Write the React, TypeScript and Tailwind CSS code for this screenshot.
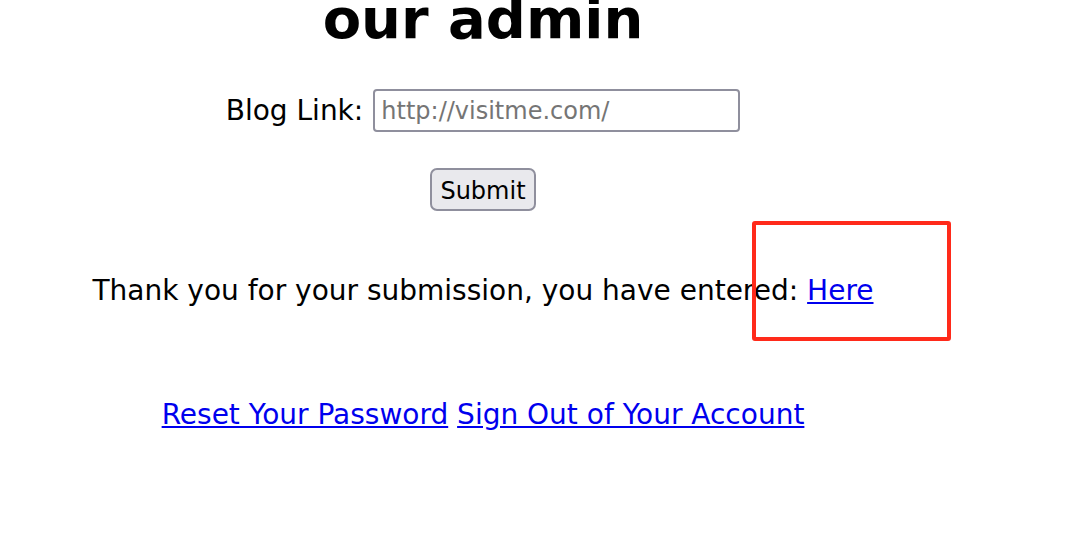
export default function App() {
  return (
    <div className="relative h-[547px] w-[1068px] overflow-hidden bg-white font-['DejaVu_Sans',sans-serif] text-black">
      <div className="w-[966px] text-center">
        {/* Heading, scrolled so only its last line shows */}
        <h1 className="mt-[-9px] text-[56px] leading-[56px] font-bold">our admin</h1>

        {/* Form */}
        <form className="mt-[41px]" onSubmit={(e) => e.preventDefault()}>
          <div className="flex items-center justify-center gap-[10px]">
            <label htmlFor="blog" className="pt-[2px] text-[28px]">
              Blog Link:
            </label>
            <input
              id="blog"
              type="text"
              placeholder="http://visitme.com/"
              className="h-[43px] w-[367px] rounded-[4px] border-2 border-[#8f8f9d] bg-white px-[6px] pt-[2px] text-[24px] outline-none placeholder:text-[#757575]"
            />
          </div>
          <div className="mt-[36px] flex justify-center">
            <button
              type="submit"
              className="h-[43px] w-[106px] rounded-[7px] border-2 border-[#8f8f9d] bg-[#e9e9ed] pt-[3px] text-[24px]"
            >
              Submit
            </button>
          </div>
        </form>

        <p className="mt-[59px] text-[28px]">
          Thank you for your submission, you have entered:{' '}
          <a href="#" className="text-[#0000ee] underline">
            Here
          </a>
        </p>

        <p className="mt-[82px] text-[28px]">
          <a href="#" className="text-[#0000ee] underline">
            Reset Your Password
          </a>{' '}
          <a href="#" className="text-[#0000ee] underline">
            Sign Out of Your Account
          </a>
        </p>
      </div>

      {/* Highlight annotation */}
      <div className="absolute left-[752px] top-[221px] h-[120px] w-[199px] rounded-[3px] border-4 border-[#ff2a1a]" />
    </div>
  );
}
